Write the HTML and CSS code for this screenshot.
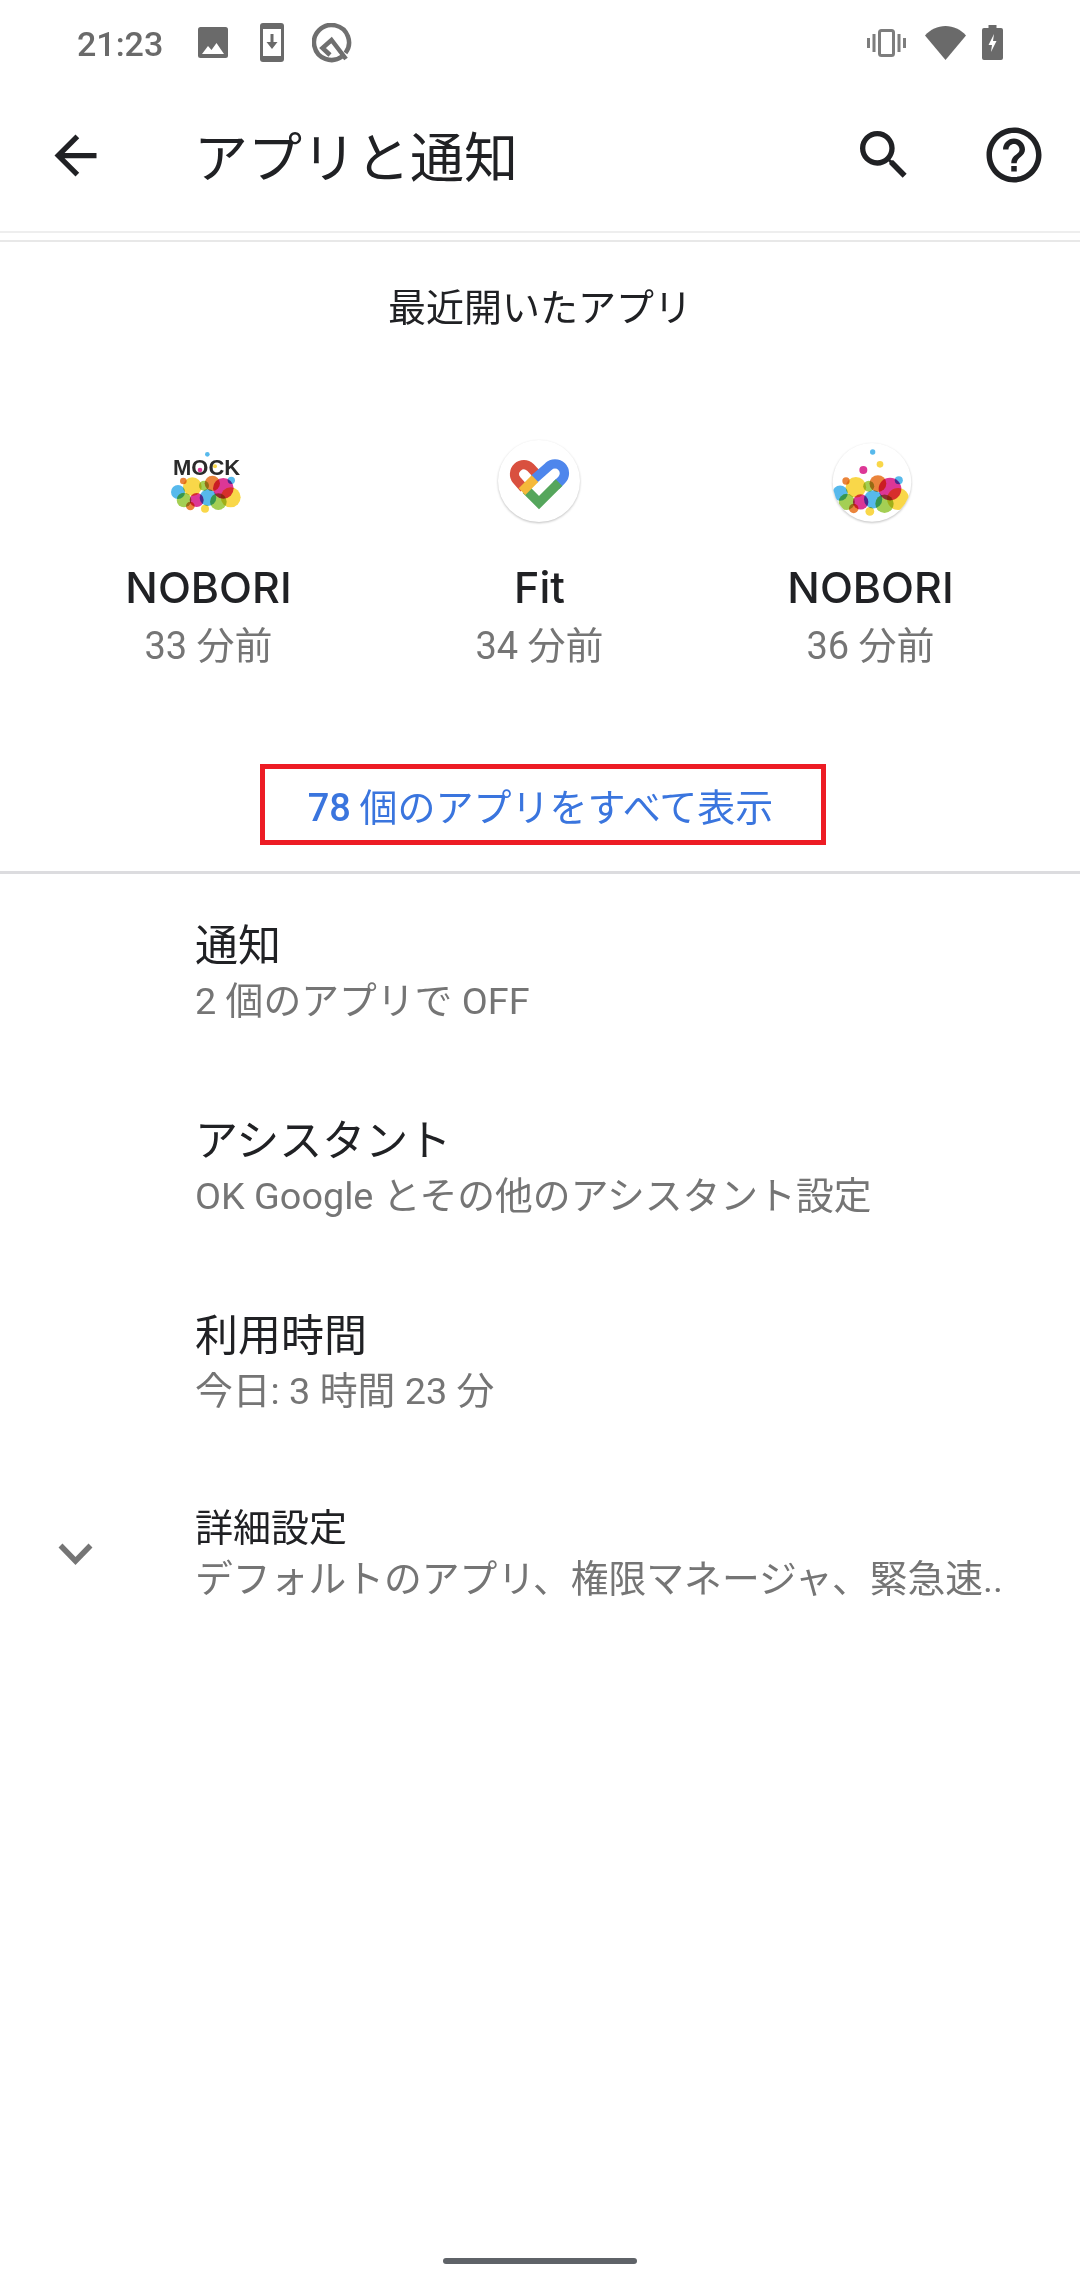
FILE: index.html
```html
<!DOCTYPE html>
<html lang="ja">
<head>
    <meta charset="UTF-8">
    <title>アプリと通知</title>
    <link rel="stylesheet" href="styles.css">
</head>
<body>
<svg class="defs" width="0" height="0">
    <defs>
        <g id="bubbles">
            <circle class="bub orange" cx="163" cy="183" r="10"/>
            <circle class="bub yellow" cx="190" cy="200" r="28"/>
            <circle class="bub lime" cx="225" cy="197" r="15"/>
            <circle class="bub orange" cx="250" cy="190" r="23"/>
            <circle class="bub yellow" cx="305" cy="232" r="30"/>
            <circle class="bub pink" cx="283" cy="205" r="31"/>
            <circle class="bub blue" cx="307" cy="181" r="11"/>
            <circle class="bub blue" cx="147" cy="216" r="21"/>
            <circle class="bub lime" cx="165" cy="240" r="22"/>
            <circle class="bub pink" cx="203" cy="240" r="21"/>
            <circle class="bub blue" cx="237" cy="233" r="25"/>
            <circle class="bub lime" cx="268" cy="245" r="25"/>
            <circle class="bub orange" cx="184" cy="258" r="13"/>
            <circle class="bub yellow" cx="228" cy="266" r="12"/>
        </g>
        <clipPath id="roundClip"><circle cx="213" cy="187" r="118"/></clipPath>
    </defs>
</svg>
<div class="page">
    <div class="statusBar">
        <span class="time">21:23</span>
        <svg class="stImage" viewBox="0 0 30 31"><rect width="30" height="31" rx="2.5" fill="#6a6a6a"/><path d="M4 27l6-8 3.5 4 5-7L26 27z" fill="#fff"/></svg>
        <svg class="stPhone" viewBox="0 0 24 39"><rect width="24" height="39" rx="3" fill="#6a6a6a"/><rect x="3" y="6" width="18" height="27" fill="#fff"/><path d="M10.5 11h3v8h4L12 26l-5.500-7h4z" fill="#6a6a6a"/></svg>
        <svg class="stQ" viewBox="0 0 40 40"><path d="M30 33.500A17.500 17.500 0 1 1 33.500 30" fill="none" stroke="#6f6f6f" stroke-width="4.500"/><path d="M34 36L19.500 17 10.500 25l7.500 7" fill="none" stroke="#6f6f6f" stroke-width="4.500"/></svg>
        <div class="statusRight">
            <svg class="stVib" viewBox="0 0 39 28"><path d="M0 9h3v10H0zM5.500 5h3v18h-3zM30.500 5h3v18h-3zM36 9h3v10h-3z" fill="#7d7d7d"/><rect x="12.500" y="1.500" width="14" height="25" rx="2" fill="none" stroke="#7d7d7d" stroke-width="3"/></svg>
            <svg class="stWifi" viewBox="0 0 41 34"><path d="M0 9.500C5.500 3.500 12.500 0 20.500 0S35.500 3.500 41 9.500L20.500 34z" fill="#6a6a6a"/></svg>
            <svg class="stBatt" viewBox="0 0 21 35"><path d="M6.500 0h8v3H19a2 2 0 0 1 2 2v28a2 2 0 0 1-2 2H2a2 2 0 0 1-2-2V5a2 2 0 0 1 2-2h4.500z" fill="#6a6a6a"/><path d="M12 9l-5.500 11h3.500l-1 7 5.500-11H11z" fill="#fff"/></svg>
        </div>
    </div>

    <div class="toolbar">
        <svg class="icBack" viewBox="0 0 24 24"><path d="M20 11H7.830l5.590-5.590L12 4l-8 8 8 8 1.410-1.410L7.830 13H20v-2z"/></svg>
        <div class="toolTitle">アプリと通知</div>
        <svg class="icSearch" viewBox="0 0 24 24"><path d="M15.500 14h-.79l-.28-.27C15.410 12.590 16 11.110 16 9.500 16 5.910 13.090 3 9.500 3S3 5.910 3 9.500 5.910 16 9.500 16c1.610 0 3.090-.59 4.230-1.570l.27.28v.79l5 4.990L20.490 19l-4.990-5zm-6 0C7.010 14 5 11.990 5 9.500S7.010 5 9.500 5 14 7.010 14 9.500 11.990 14 9.500 14z"/></svg>
        <svg class="icHelp" viewBox="0 0 24 24"><path d="M11 18h2v-2h-2v2zm1-16C6.480 2 2 6.480 2 12s4.480 10 10 10 10-4.480 10-10S17.520 2 12 2zm0 18c-4.410 0-8-3.590-8-8s3.590-8 8-8 8 3.590 8 8-3.590 8-8 8zm0-14c-2.210 0-4 1.790-4 4h2c0-1.100.9-2 2-2s2 .9 2 2c0 2-3 1.750-3 5h2c0-2.250 3-2.500 3-5 0-2.210-1.790-4-4-4z"/></svg>
    </div>
    <div class="lineGap"></div>

    <div class="recentTitle">最近開いたアプリ</div>
    <div class="recentApps">
        <div class="appItem">
            <svg class="appIcon" viewBox="0 0 480 360">
                <use href="#bubbles"/>
                <circle class="bub blue" cx="235" cy="103" r="7"/>
                <text class="mockText" x="233" y="165" text-anchor="middle">MOCK</text>
                <circle class="bub pink" cx="213" cy="150" r="7"/>
                <circle class="bub yellow" cx="258" cy="139" r="6"/>
            </svg>
            <div class="appName">NOBORI</div>
            <div class="appTime">33 分前</div>
        </div>
        <div class="appItem">
            <svg class="appIcon" viewBox="0 0 420 360">
                <circle class="iconDisc" cx="207" cy="183" r="123"/>
                <g class="fitHeart">
                    <path class="fitRed" d="M162 205L140 180A28 28 0 0 1 181 142L198 160"/>
                    <path class="fitBlue" d="M192 178L235 140A28 28 0 0 1 275 180L258 197"/>
                    <path class="fitGreen" d="M168 209L207 248 267 188"/>
                    <path class="fitYellow" d="M156 215L195 176"/>
                </g>
            </svg>
            <div class="appName">Fit</div>
            <div class="appTime">34 分前</div>
        </div>
        <div class="appItem">
            <svg class="appIcon" viewBox="0 0 420 360">
                <circle class="iconDisc" cx="213" cy="187" r="118"/>
                <g clip-path="url(#roundClip)">
                    <use href="#bubbles" transform="translate(-44.300 -18.300) scale(1.100)"/>
                    <circle class="bub blue" cx="215" cy="96" r="8"/>
                    <circle class="bub yellow" cx="237" cy="133" r="10"/>
                    <circle class="bub pink" cx="187" cy="150" r="12"/>
                </g>
            </svg>
            <div class="appName">NOBORI</div>
            <div class="appTime">36 分前</div>
        </div>
    </div>
    <div class="showAll"><span class="num">78</span> 個のアプリをすべて表示</div>
    <div class="divider"></div>

    <div class="settingRow">
        <div class="rowTitle">通知</div>
        <div class="rowSub">2 個のアプリで OFF</div>
    </div>
    <div class="settingRow">
        <div class="rowTitle">アシスタント</div>
        <div class="rowSub">OK Google とその他のアシスタント設定</div>
    </div>
    <div class="settingRow">
        <div class="rowTitle">利用時間</div>
        <div class="rowSub">今日: 3 時間 23 分</div>
    </div>
    <div class="settingRow advanced">
        <svg class="icChevron" viewBox="0 0 35 22"><path d="M2.500 2.500L17.500 18 32.500 2.500" fill="none" stroke="#757575" stroke-width="5.500"/></svg>
        <div class="rowTitle small">詳細設定</div>
        <div class="rowSub">デフォルトのアプリ、権限マネージャ、緊急速..</div>
    </div>

    <div class="spacer"></div>
    <div class="homeBar"></div>
</div>
</body>
</html>
```
FILE: styles.css
```css
html,body{
    margin: 0;
    padding: 0;
    background: #fff;
}
.defs{
    position: absolute;
}
.page{
    width: 1080px;
    height: 2280px;
    display: flex;
    flex-direction: column;
    overflow: hidden;
    font-family: "Noto Sans CJK JP", "Roboto", sans-serif;
    color: #202124;
}
.statusBar{
    height: 85px;
    display: flex;
    align-items: center;
    padding: 0 77px 0 77px;
    box-sizing: border-box;
}
.time{
    font-family: "Roboto", sans-serif;
    font-size: 34px;
    font-weight: 500;
    line-height: 42px;
    padding-top: 2px;
    color: #6a6a6a;
    width: 87px;
    white-space: nowrap;
}
.stImage{
    width: 30px;
    height: 31px;
    margin-left: 34px;
}
.stPhone{
    width: 24px;
    height: 39px;
    margin-left: 32px;
}
.stQ{
    width: 40px;
    height: 40px;
    margin-left: 28px;
}
.statusRight{
    margin-left: auto;
    display: flex;
    align-items: center;
}
.stVib{
    width: 39px;
    height: 28px;
}
.stWifi{
    width: 41px;
    height: 34px;
    margin-left: 19px;
}
.stBatt{
    width: 21px;
    height: 35px;
    margin-left: 16px;
}
.toolbar{
    height: 148px;
    box-sizing: border-box;
    display: flex;
    align-items: center;
    padding: 0 33px 6px 44px;
    border-bottom: 2px solid #eeeeee;
}
.toolbar svg{
    fill: #202124;
    flex: none;
}
.icBack{
    width: 63px;
    height: 63px;
}
.toolTitle{
    margin-left: 87px;
    font-size: 54px;
    line-height: 64px;
    white-space: nowrap;
}
.icSearch{
    width: 64px;
    height: 64px;
    margin-left: auto;
}
.icHelp{
    width: 66px;
    height: 66px;
    margin-left: 65px;
}
.lineGap{
    height: 7px;
    border-bottom: 2px solid #e8e8e8;
}
.recentTitle{
    margin-top: 38px;
    height: 50px;
    line-height: 50px;
    font-size: 38px;
    text-align: center;
}
.recentApps{
    margin-top: 90px;
    padding: 0 43px;
    display: grid;
    grid-template-columns: repeat(3, 331px);
}
.appItem{
    display: flex;
    flex-direction: column;
    align-items: center;
}
.appIcon{
    width: 160px;
    height: 120px;
    overflow: visible;
}
.appName{
    margin-top: 17px;
    font-family: "Inter", "Roboto", sans-serif;
    font-size: 43px;
    font-weight: 500;
    line-height: 60px;
}
.appTime{
    font-family: "Roboto", "Noto Sans CJK JP", sans-serif;
    font-size: 38px;
    line-height: 59px;
    color: #757575;
}
.bub{
    mix-blend-mode: multiply;
    opacity: 0.88;
}
.orange{
    fill: #e8731f;
}
.yellow{
    fill: #f9d230;
}
.lime{
    fill: #98c93c;
}
.pink{
    fill: #d81b87;
}
.blue{
    fill: #3fb0ea;
}
.mockText{
    font-family: "Liberation Sans", sans-serif;
    font-size: 66px;
    font-weight: 700;
    fill: #2b2b2b;
}
.iconDisc{
    fill: #fff;
    filter: drop-shadow(0 3px 3px rgba(0,0,0,0.25));
}
.fitHeart path{
    fill: none;
    stroke-width: 28px;
}
.fitRed{
    stroke: #d9503f;
}
.fitBlue{
    stroke: #4e86ec;
}
.fitGreen{
    stroke: #55a65c;
}
.fitYellow{
    stroke: #f5b93a;
}
.showAll{
    align-self: center;
    margin-top: 88px;
    margin-left: 6px;
    width: 566px;
    height: 81px;
    box-sizing: border-box;
    border: 5px solid #ed1c24;
    padding-right: 5px;
    text-align: center;
    line-height: 71px;
    font-size: 38px;
    color: #3a75de;
    white-space: nowrap;
}
.num{
    font-family: "Roboto", sans-serif;
    font-weight: 500;
}
.divider{
    margin-top: 26px;
    margin-bottom: 1px;
    height: 3px;
    background: #dcdcdf;
}
.settingRow{
    height: 195px;
    padding-left: 195px;
    box-sizing: border-box;
    display: flex;
    flex-direction: column;
    justify-content: center;
    position: relative;
}
.rowTitle{
    font-size: 43px;
    line-height: 57px;
    white-space: nowrap;
}
.rowTitle.small{
    font-size: 38px;
}
.rowSub{
    font-family: "Roboto", "Noto Sans CJK JP", sans-serif;
    font-size: 37.800px;
    line-height: 60px;
    color: #757575;
    white-space: nowrap;
}
.advanced{
    height: 188px;
}
.advanced .rowTitle{
    line-height: 50px;
}
.advanced .rowSub{
    line-height: 58px;
}
.icChevron{
    position: absolute;
    left: 58px;
    top: 83px;
    width: 35px;
    height: 22px;
}
.spacer{
    flex: 1;
}
.homeBar{
    align-self: center;
    margin-bottom: 16px;
    width: 194px;
    height: 6px;
    border-radius: 3px;
    background: #5f6368;
}
```
